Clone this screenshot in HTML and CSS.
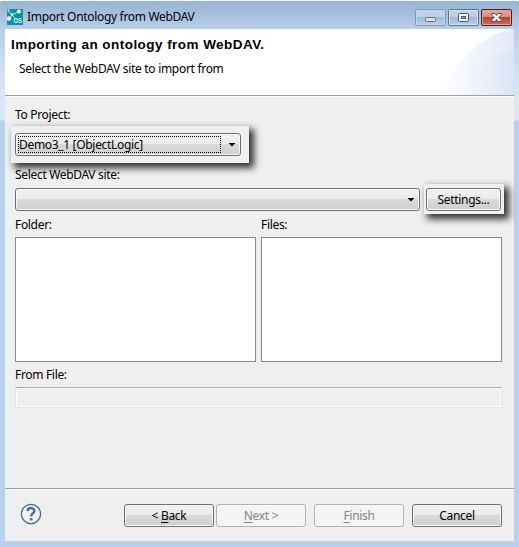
FILE: index.html
```html
<!DOCTYPE html>
<html lang="en">
<head>
<meta charset="utf-8">
<title>Import Ontology from WebDAV</title>
<link rel="stylesheet" href="styles.css">
</head>
<body>
<div class="window">
  <div class="titlebar">
    <svg class="app-icon" width="16" height="16" viewBox="0 0 16 16">
      <rect width="16" height="16" fill="#0795a5"/>
      <path d="M2 3L5 6M5 6L2 10M5 6L11 3M5 6L8 9" stroke="#b9edf0" stroke-width="1"/>
      <circle cx="12" cy="2.5" r="2" fill="#fff"/><circle cx="2" cy="9.5" r="2.2" fill="#fff"/>
      <circle cx="5" cy="5.5" r="1.3" fill="#e5ffff"/><circle cx="1.5" cy="1.5" r="1" fill="#fff"/>
      <text class="app-text" x="6.4" y="14" textLength="8.6" lengthAdjust="spacingAndGlyphs">OS</text>
    </svg>
    <span class="title">Import Ontology from WebDAV</span>
    <div class="controls">
      <svg class="control minimize" width="31" height="17"><rect x="10.5" y="8.5" width="10" height="4" rx="1" fill="#ddd" stroke="#6b7080"/></svg>
      <svg class="control" width="31" height="17"><rect x="10.5" y="4.5" width="10" height="8" rx="1" fill="#f4f4f4" stroke="#50576b"/><rect x="13.5" y="7.5" width="4" height="2" fill="#9ab7d5" stroke="#50576b"/></svg>
      <svg class="control close" width="31" height="17"><path d="M10.5 4.5h3.5l1.5 2 1.5-2h3.5v1.5l-2.8 2.5 2.8 2.5v1.5H17l-1.500-2-1.500 2h-3.500V11l2.800-2.500-2.800-2.500z" fill="#f8f8f8" stroke="#514e65"/></svg>
    </div>
  </div>
  <main class="dialog">
    <header class="header">
      <svg class="banner" width="76" height="66" viewBox="0 0 76 66">
        <defs>
          <linearGradient id="outer"><stop stop-color="#fff"/><stop offset="1" stop-color="#e3e9f8"/></linearGradient>
          <linearGradient id="inner"><stop stop-color="#fff" stop-opacity="0"/><stop offset="1" stop-color="#dbe3f6"/></linearGradient>
        </defs>
        <path d="M0 66C17 35 40 6 76 0V66Z" fill="url(#outer)"/>
        <path d="M38 36C48 18 60 6 76 1V66C60 66 45 50 38 36Z" fill="url(#inner)" opacity=".3"/>
        <path d="M4 66C22 42 45 23 76 22V66Z" fill="url(#inner)"/>
      </svg>
      <h1>Importing an ontology from WebDAV.</h1>
      <p>Select the WebDAV site to import from</p>
    </header>
    <section class="form">
      <div class="label t-project">To Project:</div>
      <div class="lift project-lift">
        <div class="control-face combo"><span class="focus"><span>Demo3_1 [ObjectLogic]</span></span><i class="arrow"></i></div>
      </div>
      <div class="label t-site">Select WebDAV site:</div>
      <div class="site-row">
        <div class="control-face combo site"><i class="arrow"></i></div>
        <div class="lift settings-lift"><button class="control-face"><span class="t-settings">Settings...</span></button></div>
      </div>
      <div class="lists">
        <div><div class="label">Folder:</div><div class="list"></div></div>
        <div><div class="label">Files:</div><div class="list"></div></div>
      </div>
      <div class="label from">From File:</div>
      <div class="file-field"></div>
    </section>
    <footer class="footer">
      <svg class="help" width="22" height="22" viewBox="0 0 22 22"><circle cx="11" cy="11" r="9.6" fill="#f1f3f5" stroke="#536583" stroke-width="1.300"/><path d="M7.600 8.100C7.800 3.900 14.500 4.200 14.300 8.100C14.200 10.400 11.200 10.300 11.200 13.400" fill="none" stroke="#536d99" stroke-width="2.500"/><rect x="9.800" y="15" width="2.800" height="2.500" rx=".8" fill="#536d99"/></svg>
      <button class="control-face"><span>&lt; <u>B</u>ack</span></button>
      <button class="control-face disabled next" disabled><span><u>N</u>ext &gt;</span></button>
      <button class="control-face disabled" disabled><span><u>F</u>inish</span></button>
      <button class="control-face"><span>Cancel</span></button>
    </footer>
  </main>
</div>
</body>
</html>
```
FILE: styles.css
```css
* { box-sizing: border-box; }
body { margin: 0; color: #000; font: 12px/16px "Noto Sans", sans-serif; letter-spacing: -.32px; }
.window { width: 519px; height: 547px; padding: 1px 5px 6px; overflow: hidden; background: linear-gradient(#96b3d1 0, #b8cfe9 28px, #d5e4f3 80px, #dce8f5 118px, #b9d1ea 121px); border-top: 1px solid #f4f8fb; }
.window, .titlebar { border-radius: 2px 2px 0 0; }
.titlebar { height: 27px; display: flex; align-items: flex-start; white-space: nowrap; }
.app-icon { margin: 7px 0 0 2px; flex: none; }
.app-text { font: bold 7px "Liberation Sans", sans-serif; letter-spacing: 0; fill: #dfffff; }
.title { margin: 7px 0 0 4px; letter-spacing: -.32px; }
.controls { margin: 7px 2px 0 auto; display: flex; gap: 2px; }
.control { display: block; border-radius: 2px; background: linear-gradient(#c5d8eb 0, #b8cee5 49%, #9cb9d7 50%, #bdd5ec); box-shadow: inset 0 0 0 1px #60738b, inset 0 0 0 2px #d4e3f1; }
.minimize { box-shadow: inset 0 0 0 1px #8199b4, inset 0 0 0 2px #c0d5e9; }
.close { background: linear-gradient(#e9aaa0 0, #d98a7d 49%, #bd422e 50%, #d1735f); box-shadow: inset 0 0 0 1px #541c26, inset 0 0 0 2px #e4a198; }
.dialog { width: 509px; height: 512px; display: flex; flex-direction: column; background: #efefef; }
.header { height: 67px; padding: 8px 6px 0; background: #fff; border-bottom: 1px solid #a0a0a0; position: relative; flex: none; }
.banner { position: absolute; right: 0; top: 0; }
h1 { margin: 0; font: bold 13.5px/16px "Liberation Sans", sans-serif; letter-spacing: .45px; white-space: nowrap; }
p { margin: 8px 0 0 8px; letter-spacing: -.3px; }
.form { height: 392px; padding: 10px 12px 0 10px; border-top: 1px solid #fff; flex: none; }
.label { height: 16px; white-space: nowrap; }
.lift { background: #efefef; box-shadow: 4px 4px 7px 1px #333; }
.project-lift { width: 238px; height: 37px; margin: 3px 0 0 -4px; padding: 7px 8px 7px 4px; }
.control-face { width: 90px; height: 23px; padding: 0; border: 1px solid #707070; border-radius: 3px; background: linear-gradient(#f2f2f2 0, #ebebeb 49%, #dadada 50%, #cfcfcf); box-shadow: inset 0 0 0 1px #f8f8f8; color: #000; font: inherit; letter-spacing: inherit; line-height: 20px; }
.combo { width: 226px; display: flex; align-items: center; justify-content: space-between; padding: 0 4px 0 2px; }
.focus { width: 203px; height: 17px; border: 1px dotted #000; line-height: 15px; }
.arrow { width: 8px; height: 4px; background: #000; clip-path: polygon(0 0, 100% 0, 50% 100%); }
.t-site { margin-top: 4px; }
.site-row { display: flex; align-items: flex-start; margin-top: 1px; height: 30px; }
.site { width: 405px; flex: none; margin-top: 4px; justify-content: flex-end; }
.settings-lift { width: 80px; height: 30px; padding: 4px 3px 3px 2px; margin-left: 4px; flex: none; }
.settings-lift button { width: 75px; display: block; }
.lists { display: flex; gap: 5px; margin-top: 3px; }
.list { width: 241px; height: 125px; margin-top: 4px; border: 1px solid #828790; background: #fff; }
.from { margin-top: 5px; }
.file-field { height: 21px; margin-top: 4px; border: 1px solid #e2e3ea; border-top-color: #abadb3; box-shadow: inset 0 0 0 1px #fff; }
.footer { height: 53px; padding: 15px 12px 0 15px; border-top: 1px solid #a0a0a0; box-shadow: inset 0 1px #fff; display: flex; align-items: flex-start; }
.help { margin: -1px 82px 0 0; flex: none; }
.footer button { flex: none; }
.next { margin: 0 8px 0 2px; }
.footer button:last-child { margin-left: 8px; }
.disabled { background: #f4f4f4; border-color: #adb2b5; color: #838383; }
u { text-decoration: underline; text-underline-offset: 2px; text-decoration-thickness: 1px; }
```
